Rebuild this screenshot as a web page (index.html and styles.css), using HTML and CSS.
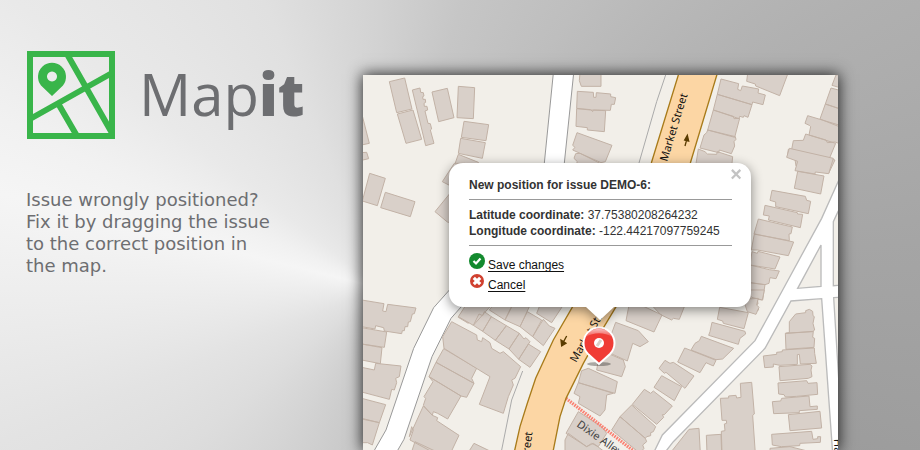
FILE: index.html
```html
<!DOCTYPE html>
<html lang="en">
<head>
<meta charset="utf-8">
<title>Mapit</title>
<link rel="stylesheet" href="styles.css">
</head>
<body>
<main class="banner">
  <section class="intro">
    <h1 class="brand">
      <svg class="brand-icon" viewBox="0 0 88 88" aria-hidden="true">
        <g fill="none" stroke="#39b54a" stroke-width="6">
          <rect x="3" y="3" width="82" height="82"/>
          <path d="M3 68 85 22M40 3 85 82M32 54 50 85"/>
        </g>
        <path fill="#39b54a" fill-rule="evenodd" d="M25 45 14 34.500A14 14 0 1 1 36 34.500ZM25 20.500a5 5 0 1 0 .01 0Z"/>
      </svg>
      <span class="brand-name">Map<b>it</b></span>
    </h1>
    <p class="tagline">Issue wrongly positioned?<br>Fix it by dragging the issue<br>to the correct position in<br>the map.</p>
  </section>
  <section class="map" aria-label="Map">
    <svg class="tiles" viewBox="363 75 475 375" preserveAspectRatio="xMinYMin slice">
      <g class="road" transform="translate(350 60) scale(.33333)">
        <path d="M611 30 583 309 570 400 630 400 643 309 672 30Z"/>
        <path class="edge" d="M952 30 920 125 867 309"/>
      </g>
      <g class="road" transform="translate(355 160) scale(.33333)">
        <path d="M310 360 236 443 176 565 93 810 50 885 120 885 147 838 231 590 288 475 350 405Z"/>
      </g>
      <g transform="translate(630 290) scale(.33333)">
        <path class="street" d="M640-360 575-215 458 0 375 152 97 435 70 490H640Z"/>
        <path class="block" d="M573-135V-11L503-5ZM640-265 624-235 610-205V-13L640-15ZM95 500 130 455 405 175 483 33 575 26 608 490ZM611 23 640 21V490Z"/>
      </g>
      <g class="house" transform="translate(350 60) scale(.33333)">
        <path d="M118 65 164 54 186 147 140 158ZM142 162 189 150 215 238 168 250ZM187 90 210 84 212 97 220 98 222 108 218 110 219 118 226 118 227 127 222 130 223 139 231 139 233 150 225 153 234 190 241 191 245 207 241 210 252 250 227 257ZM246 96 292 85 312 173 266 185ZM325 79 374 83 370 176 321 173ZM342 184 416 194 408 242 334 232ZM332 235 406 248 397 295 325 280ZM325 283 385 307 400 340 305 340ZM30 140 58 250 30 256ZM30 278 50 277 56 296 30 302Z"/>
        <path d="M690 40 688 62 694 79 753 79V40ZM682 94 730 97 731 112 738 112 739 98 782 102 782 110 797 113 793 133 784 133 781 151 730 150 728 155 722 149 680 145ZM680 146 721 150 767 152 763 215 712 210 712 203 678 199ZM681 218 786 256 766 305 753 308 668 270 675 262 668 256ZM677 281 690 280 770 320 770 335 670 335 682 305 672 295Z"/>
      </g>
      <g class="house" transform="translate(590 60) scale(.33333)">
        <path d="M393 57 446 71 443 88 452 92 457 78 506 87 504 99 526 105 519 134 488 126 486 134 382 103ZM382 103 486 134 474 172 462 167 460 172 449 169 447 176 370 150ZM370 150 430 169 432 176 449 175 434 232 353 210ZM353 210 436 230 438 238 432 245 434 258 424 281 388 270 386 278 330 264 342 225 350 218ZM325 267 345 275 352 282 380 283 382 275 428 290 424 330 315 330ZM473 40 594 40 569 107 497 78 496 72 470 64Z"/>
        <path d="M738 45 726 76 760 86V45ZM723 84 760 94V150L706 132ZM706 132 760 150V205L690 177ZM653 167 760 199V255L735 246 712 248 708 240 657 225 662 200 658 196 645 190ZM647 222 737 250 718 296 605 268 610 242 640 241ZM595 268 718 296 735 300 716 340 645 325 618 318 615 298 592 290Z"/>
      </g>
      <g class="house" transform="translate(740 150) scale(.33333)">
        <path d="M148-5 280 25 266 71 226 66 225 72 165 62 173 34 140 22ZM173 64 252 78 242 132 163 115ZM96 121 196 139 200 151 212 154 205 191 107 170 107 156 90 151ZM75 166 172 188 173 192 188 193 181 233 85 210 88 198 70 195ZM55 207 157 231 153 251 147 252 148 272 42 252ZM43 252 161 276 145 317 52 300 34 300ZM36 305 52 310 54 304 120 321 105 357 30 345ZM30 345 88 359 118 363 108 386 90 383 87 400 75 404 30 398ZM30 398 75 404 68 450 52 448 54 462 47 465 56 480H30Z"/>
      </g>
      <g class="house" transform="translate(355 160) scale(.33333)">
        <path d="M44 40 91 55 67 137 22 123ZM91 97 180 125 166 170 77 143ZM262 65 298 10 330 10V100ZM240 155 285 100 330 100V200L277 186ZM20 420 87 431 83 453 93 455 98 433 183 444 178 461 172 462 166 485 160 486 158 500 150 500 148 512 142 512 140 521 88 513 86 503 62 497 60 507 20 500ZM20 503 95 516 88 562 20 552ZM20 552 81 563 76 611 20 600ZM62 610 138 618 133 650 122 655 125 668 118 690 110 688 103 718 20 696V622L58 630ZM20 715 92 734 73 788 20 775ZM20 777 73 788 52 855 38 848 20 848Z"/>
        <path d="M243 607 266 566 365 625 350 655 357 670ZM222 650 243 607 357 670 335 712 318 708ZM207 710 234 665 222 650 318 708 278 777 248 760 235 755 232 766 205 736 212 715ZM163 830 205 738 232 766 248 773 245 782 312 826 277 900 165 840 175 810 170 800ZM165 890 180 845 255 880ZM335 885 357 850 409 875ZM310 472 325 450 345 470 340 490Z"/>
      </g>
      <g class="house" transform="translate(440 300) scale(.33333)">
        <path d="M55 50 78 15 150 20 100 76ZM100 76 117 42 128 47 133 35 154 50 128 94ZM128 94 154 50 199 77 166 121ZM166 121 199 77 238 100 207 147ZM207 147 238 100 252 117 258 113 270 125 236 178ZM236 178 265 132 302 155 270 202ZM148 30 160 15 215 20 195 60ZM215 20 268 20 240 80 195 60ZM240 80 262 35 305 60 278 110ZM278 110 310 58 328 78 345 85 310 137ZM290 40 300 15 370 15 335 68Z"/>
        <path d="M8 110 35 65 110 105 112 120 125 125 128 113 150 128 155 145 180 160 190 155 242 200 225 235 215 240 220 255 205 290 190 340 118 313 150 230 12 145Z"/>
        <path d="M527 67 595 92 625 125 600 140 578 130 562 183 500 155 505 125 515 100ZM480 150 550 180 556 200 545 230 470 210ZM425 212 445 205 532 245 525 280 415 248ZM415 248 520 280 500 285 495 330 480 348 415 310 420 290 402 280ZM415 335 485 380 500 400 475 440 455 430 440 440 378 400ZM375 420 385 400 440 440 460 430 500 460H375Z"/>
      </g>
      <g class="house" transform="translate(630 290) scale(.33333)">
        <path d="M478 95 497 72 527 68V62L538 58 548 64 549 77 553 80 549 100 554 120 548 125 467 130 478 128ZM466 130 550 124 548 142 554 145 552 172 468 178ZM400 198 440 193V187L457 185V180L553 174 554 190 559 220 511 222 508 193 502 194V223L450 226 430 222V231L404 233ZM447 230 540 223 546 228 543 240 546 260 535 265 450 272ZM444 279 530 272 534 280 561 278 563 313 500 319 466 321 462 314 446 312ZM427 335 452 333 455 325 537 318 540 350 562 348V358L508 362V368L431 371ZM475 374 570 364 575 414 480 422ZM425 433 545 424 549 448 563 446V440L572 440 571 457 510 460 509 467 454 470 427 465ZM420 475 480 470 560 490H420ZM331 280 365 277 373 372 368 376 376 490 276 490 274 424 285 422 283 402 290 400 289 391 276 391 271 325 296 324V318L318 316 320 324 333 322ZM229 436 273 433 275 490H231ZM120 490 177 418 207 415 211 490Z"/>
        <path d="M269 52 355 68 342 116 280 100 278 93 262 88ZM246 97 345 124 347 132 330 145 325 163 236 136 240 125ZM214 139 311 175 278 207 258 209 183 180 195 160 208 152ZM164 174 258 211 250 228 228 218 210 248 143 216ZM105 211 120 220 130 217 192 258 165 295 108 247 103 250 87 235ZM95 257 155 290 133 332 72 292ZM43 298 62 310 70 303 127 348 103 374 97 374 101 382 80 403 7 343ZM-30 380 5 345 77 410 70 425 62 428 62 437 50 440 46 445ZM-55 420-30 380 46 445 50 455 38 465 42 475 30 490ZM-12 92 0 30 96 75 72 126ZM60 40 163 50 148 88 130 85 125 90 92 74ZM350 0 403 0 397 30 365 22ZM340 28 385 25 380 45 387 52 378 73 352 65Z"/>
      </g>
      <g transform="translate(440 300) scale(.33333)">
        <path class="edge" d="M248 213 215 300 184 455"/>
        <path class="alley" d="M378 295 600 468"/>
        <path class="market" d="M715-675 634-411 540-180 398 20 340 120 287 235 262 310 240 380 222 460H338L360 350 378 295 430 190 480 100 527 22 680-230 751-411 832-680H715Z"/>
        <path class="arrow" d="M380 108 368 130M363 120 365 138 378 130ZM735-462 741-484M734-480 742-494 746-477Z"/>
      </g>
      <g class="label">
        <text transform="translate(667 162) rotate(-73)">Market Street</text>
        <text transform="translate(576 363) rotate(-60)">Market Street</text>
        <text transform="translate(524 502) rotate(-83)">Market Street</text>
        <text class="soft" transform="translate(576 426) rotate(35)">Dixie Alley</text>
        <text transform="translate(834 439) rotate(88)">Hattie Street</text>
      </g>
    </svg>
    <svg class="pin" viewBox="0 0 36 44" role="img" aria-label="Issue position">
      <defs>
        <linearGradient id="gloss" x2="0" y2="1">
          <stop offset="0" stop-color="#fff" stop-opacity=".7"/>
          <stop offset="1" stop-color="#fff" stop-opacity=".1"/>
        </linearGradient>
      </defs>
      <ellipse cx="18" cy="39" rx="12" ry="2" fill="#000" opacity=".3"/>
      <path d="M18 39 7 29A15.500 15.500 0 1 1 29 29Z" fill="#f03c36" stroke="#fff" stroke-width="2"/>
      <path d="M5 12C8 1 28 1 31 12 24 7 12 7 5 12Z" fill="url(#gloss)"/>
      <circle cx="18" cy="18" r="5" fill="#fff"/>
      <path d="m16 21 4-6" stroke="#d9d0c9" stroke-width="3"/>
    </svg>
    <section class="popup" aria-label="New position">
      <button class="close" type="button" aria-label="Close">×</button>
      <strong class="title">New position for issue DEMO-6:</strong>
      <p class="coords"><b>Latitude coordinate:</b> 37.75380208264232<br><b>Longitude coordinate:</b> -122.44217097759245</p>
      <ul class="actions">
        <li>
          <svg class="status" viewBox="0 0 16 16" aria-hidden="true"><circle cx="8" cy="8" r="8" fill="#138a2e"/><path d="m4.500 8 2.500 2.500 4.500-5" fill="none" stroke="#fff" stroke-width="2.200"/></svg>
          <a href="#save">Save changes</a>
        </li>
        <li>
          <svg class="status" viewBox="0 0 16 16" aria-hidden="true"><circle cx="8" cy="8" r="7" fill="#d0402f"/><path d="m4.800 4.800 6.400 6.400m0-6.400-6.400 6.400" stroke="#fff" stroke-width="3.200"/></svg>
          <a href="#cancel">Cancel</a>
        </li>
      </ul>
    </section>
  </section>
</main>
</body>
</html>
```
FILE: styles.css
```css
* {
  box-sizing: border-box;
}

body {
  margin: 0;
  font-family: "Liberation Sans", Arial, sans-serif;
}

.banner {
  display: flex;
  min-height: 100vh;
  padding: 50px 82px 0 26px;
  overflow: hidden;
  background: conic-gradient(from 0deg at 380px 288px,
    #d2d2d2 0deg, #c6c6c6 16deg, #bebebe 35deg, #b0b0b0 60deg,
    #a5a5a5 85deg, #9c9c9c 110deg, #a8a8a8 150deg, #c6c6c6 186deg,
    #d4d4d4 212deg, #dddddd 231deg, #e3e3e3 248deg, #eeeeee 270deg,
    #f5f5f5 284deg, #f1f1f1 294deg, #e9e9e9 308deg, #e0e0e0 338deg,
    #d2d2d2 360deg);
}

.intro {
  flex: 0 0 337px;
  color: #6d6e71;
}

.brand {
  display: flex;
  align-items: flex-start;
  gap: 24px;
  margin: 0;
  padding: 1px;
  height: 90px;
  font-weight: 400;
}

.brand-icon {
  width: 88px;
  height: 88px;
}

.brand-name {
  font: 400 58px/86px "Open Sans", sans-serif;
}

.brand-name b {
  font-weight: 800;
}

.tagline {
  margin: 49px 0 0;
  font: 18px/22px "DejaVu Sans", Verdana, sans-serif;
}

.map {
  position: relative;
  flex: 1;
  height: calc(100vh - 75px);
  margin-top: 25px;
  background: #f2efe9;
  box-shadow: 0 0 14px 1px rgba(0, 0, 0, .8);
}

.tiles {
  display: block;
  width: 100%;
  height: 100%;
}

.road {
  fill: #fff;
  stroke: #999;
  stroke-width: 3;
}

.edge {
  fill: none;
  stroke: #aaa;
  stroke-width: 3;
}

.street {
  fill: #fff;
  stroke: #bbb;
  stroke-width: 4;
}

.block {
  fill: #f2efe9;
  stroke: #bbb;
  stroke-width: 4;
}

.house {
  fill: #d9d0c9;
  stroke: #c2b2a6;
  stroke-width: 3;
}

.market {
  fill: #fcd6a4;
  stroke: #a87b1a;
  stroke-width: 4;
}

.alley {
  stroke: #fa8072;
  stroke-width: 10;
  stroke-dasharray: 5 3;
}

.arrow {
  fill: #5a3c00;
  stroke: #5a3c00;
  stroke-width: 4;
}

.label {
  fill: #111;
  font: 11px "Noto Sans", sans-serif;
}

.soft {
  fill: #444;
}

.pin {
  position: absolute;
  left: 218px;
  top: 250px;
  width: 36px;
  height: 44px;
}

.popup {
  position: absolute;
  left: 86px;
  top: 88px;
  width: 302px;
  padding: 14px 19px 14px 20px;
  border-radius: 14px;
  background: #fff;
  color: #333;
  font-size: 12px;
  line-height: 16px;
  filter: drop-shadow(0 3px 6px rgba(0, 0, 0, .45));
}

.popup::after {
  content: "";
  position: absolute;
  left: 137px;
  top: 100%;
  border: solid transparent;
  border-width: 13px 14px 0;
  border-top-color: #fff;
}

.close {
  position: absolute;
  top: 4px;
  right: 9px;
  padding: 0;
  border: 0;
  background: none;
  color: #c3c3c3;
  font: bold 20px/14px "Liberation Sans", Arial, sans-serif;
}

.title {
  display: block;
}

.coords {
  margin: 6px 0 7px;
  padding: 7px 0 6px;
  border: solid #999;
  border-width: 1px 0;
}

.actions {
  display: grid;
  margin: 0;
  padding: 0;
  list-style: none;
}

.actions li {
  display: flex;
  align-items: flex-start;
  gap: 3px;
  height: 20px;
}

.actions a {
  padding-top: 4px;
  color: #111;
  text-underline-offset: 2px;
}

.status {
  width: 16px;
  height: 16px;
}
```
